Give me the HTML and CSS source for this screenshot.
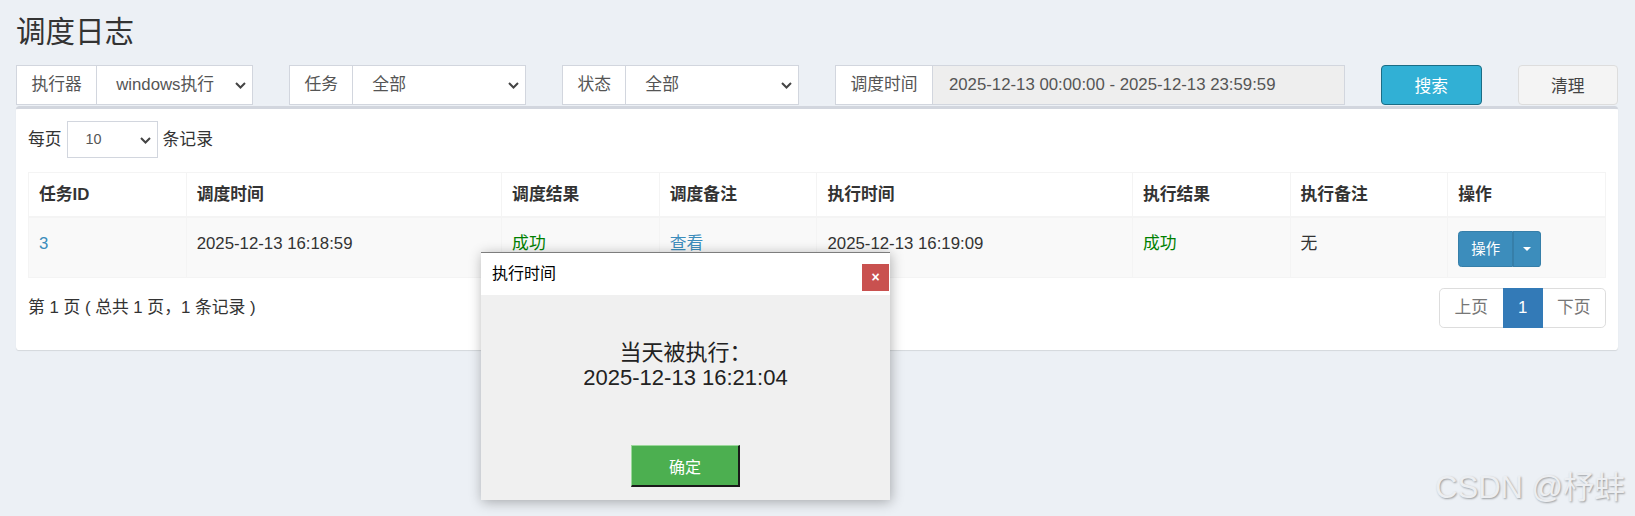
FILE: index.html
```html
<!DOCTYPE html>
<html lang="zh-CN">
<head>
    <meta charset="UTF-8">
    <meta name="viewport" content="width=device-width, initial-scale=1.0">
    <title>调度日志</title>
    <link rel="stylesheet" href="styles.css">
</head>
<body>
    <!-- Cabeçalho -->
    <div class="content-header">
        <h1>调度日志</h1>
    </div>

    <section class="content">
        <!-- Filtros -->
        <div class="filter-row">
            <div class="col-2">
                <div class="input-group">
                    <span class="addon">执行器</span>
                    <div class="select">windows执行
                        <svg class="chevron" width="11" height="7" viewBox="0 0 11 7"><path d="M1 1 L5.5 5.5 L10 1" /></svg>
                    </div>
                </div>
            </div>
            <div class="col-2">
                <div class="input-group">
                    <span class="addon">任务</span>
                    <div class="select">全部
                        <svg class="chevron" width="11" height="7" viewBox="0 0 11 7"><path d="M1 1 L5.5 5.5 L10 1" /></svg>
                    </div>
                </div>
            </div>
            <div class="col-2">
                <div class="input-group">
                    <span class="addon">状态</span>
                    <div class="select">全部
                        <svg class="chevron" width="11" height="7" viewBox="0 0 11 7"><path d="M1 1 L5.5 5.5 L10 1" /></svg>
                    </div>
                </div>
            </div>
            <div class="col-4">
                <div class="input-group">
                    <span class="addon">调度时间</span>
                    <div class="input readonly">2025-12-13 00:00:00 - 2025-12-13 23:59:59</div>
                </div>
            </div>
            <div class="col-1">
                <button class="btn btn-info">搜索</button>
            </div>
            <div class="col-1">
                <button class="btn btn-default">清理</button>
            </div>
        </div>

        <!-- Tabela -->
        <div class="box">
            <div class="box-body">
                <div class="length">
                    <span>每页</span>
                    <div class="select select-sm">10
                        <svg class="chevron" width="11" height="7" viewBox="0 0 11 7"><path d="M1 1 L5.5 5.5 L10 1" /></svg>
                    </div>
                    <span>条记录</span>
                </div>

                <table class="log-table">
                    <thead>
                        <tr>
                            <th class="w1">任务ID</th>
                            <th class="w2">调度时间</th>
                            <th class="w1">调度结果</th>
                            <th class="w1">调度备注</th>
                            <th class="w2">执行时间</th>
                            <th class="w1">执行结果</th>
                            <th class="w1">执行备注</th>
                            <th class="w1">操作</th>
                        </tr>
                    </thead>
                    <tbody>
                        <tr>
                            <td><a class="link">3</a></td>
                            <td>2025-12-13 16:18:59</td>
                            <td class="ok">成功</td>
                            <td><a class="link">查看</a></td>
                            <td>2025-12-13 16:19:09</td>
                            <td class="ok">成功</td>
                            <td>无</td>
                            <td>
                                <div class="btn-group">
                                    <span class="btn-sm">操作</span>
                                    <span class="btn-sm toggle"><span class="caret"></span></span>
                                </div>
                            </td>
                        </tr>
                    </tbody>
                </table>

                <div class="table-footer">
                    <div class="info">第 1 页 ( 总共 1 页，1 条记录 )</div>
                    <ul class="pagination">
                        <li class="disabled">上页</li>
                        <li class="active">1</li>
                        <li class="disabled">下页</li>
                    </ul>
                </div>
            </div>
        </div>
    </section>

    <!-- Janela de diálogo -->
    <div class="layer">
        <div class="layer-title">
            执行时间
            <span class="layer-close">×</span>
        </div>
        <div class="layer-content">
            <p>当天被执行：<br>2025-12-13 16:21:04</p>
            <button class="layer-btn">确定</button>
        </div>
    </div>

    <div class="watermark">CSDN @杼蚌</div>
</body>
</html>
```

FILE: styles.css
```css
/* Reset e Estilos Globais */
* {
    margin: 0;
    padding: 0;
    box-sizing: border-box;
    font-family: "Liberation Sans", "Noto Sans CJK SC", sans-serif;
}

body {
    background-color: #ecf0f5;
    color: #333;
    font-size: 16.8px;
    line-height: 24px;
    width: 1635px;
    height: 516px;
    overflow: hidden;
    position: relative;
}

/* Cabeçalho */
.content-header {
    padding: 15px 16px 0;
}

.content-header h1 {
    font-size: 29.5px;
    font-weight: normal;
    line-height: 34px;
    color: #333;
}

.content {
    padding: 16px 17px 0 16px;
}

/* Filtros */
.filter-row {
    display: grid;
    grid-template-columns: 2fr 2fr 2fr 4fr 1fr 1fr;
    margin: 0 -18px;
}

.filter-row > div {
    padding: 0 18px;
}

.input-group {
    display: flex;
    height: 40px;
}

.addon {
    background: #fff;
    border: 1px solid #d2d6de;
    border-right: none;
    color: #555;
    padding: 0 14.4px;
    line-height: 38px;
    white-space: nowrap;
}

.select {
    flex: 1;
    position: relative;
    background: #fff;
    border: 1px solid #d2d6de;
    color: #555;
    line-height: 38px;
    padding-left: 19px;
    white-space: nowrap;
}

.chevron {
    position: absolute;
    right: 6px;
    top: 50%;
    margin-top: -3px;
}

.chevron path {
    fill: none;
    stroke: #444;
    stroke-width: 2;
}

.input {
    flex: 1;
    border: 1px solid #d2d6de;
    color: #555;
    line-height: 38px;
    padding-left: 16px;
    white-space: nowrap;
}

.readonly {
    background: #eee;
}

.btn {
    width: 100%;
    height: 40px;
    font-size: 16.8px;
    border-radius: 4px;
    cursor: pointer;
}

.btn-info {
    background: #31b0d5;
    border: 1px solid #1b6d85;
    color: #fff;
}

.btn-default {
    background: #f4f4f4;
    border: 1px solid #ddd;
    color: #444;
}

/* Caixa da tabela */
.box {
    margin-top: 1px;
    background: #fff;
    border-top: 3.6px solid #d2d6de;
    border-radius: 3.6px;
    box-shadow: 0 1px 1px rgba(0, 0, 0, 0.1);
}

.box-body {
    padding: 12px 12px 22px;
}

.length {
    display: flex;
    align-items: center;
    gap: 5px;
}

.select-sm {
    flex: none;
    width: 91px;
    height: 37px;
    font-size: 14.4px;
    line-height: 35px;
    padding-left: 18px;
}

.log-table {
    width: 100%;
    margin-top: 14px;
    border-collapse: collapse;
    border: 1px solid #f4f4f4;
    table-layout: fixed;
}

.log-table th,
.log-table td {
    border: 1px solid #f4f4f4;
    text-align: left;
    vertical-align: top;
}

.log-table th {
    padding: 10px 10px 9px;
    font-weight: bold;
    border-bottom: 2.4px solid #f4f4f4;
}

.log-table td {
    padding: 14px 10px 10px;
    background: #f9f9f9;
}

.w1 {
    width: 10%;
}

.w2 {
    width: 20%;
}

.link {
    color: #3c8dbc;
}

.ok {
    color: green;
}

.btn-group {
    display: flex;
    margin-top: -1px;
}

.btn-sm {
    display: inline-flex;
    align-items: center;
    height: 35.6px;
    padding: 0 12px;
    font-size: 14.4px;
    color: #fff;
    background: #3c8dbc;
    border: 1px solid #367fa9;
    border-radius: 3.6px 0 0 3.6px;
}

.btn-sm.toggle {
    padding: 0 9.6px;
    border-left: none;
    border-radius: 0 3.6px 3.6px 0;
    box-shadow: inset 1px 0 0 #367fa9;
}

.caret {
    width: 0;
    height: 0;
    border-top: 4.8px solid #fff;
    border-left: 4.8px solid transparent;
    border-right: 4.8px solid transparent;
}

/* Rodapé */
.table-footer {
    display: flex;
    justify-content: space-between;
    align-items: center;
    margin-top: 10px;
}

.pagination {
    display: flex;
    list-style: none;
}

.pagination li {
    padding: 7.2px 14.4px;
    line-height: 24px;
    border: 1px solid #ddd;
    margin-left: -1px;
    color: #777;
    background: #fff;
}

.pagination li:first-child {
    border-radius: 4.8px 0 0 4.8px;
}

.pagination li:last-child {
    border-radius: 0 4.8px 4.8px 0;
}

.pagination li.active {
    background: #337ab7;
    border-color: #337ab7;
    color: #fff;
    position: relative;
}

/* Janela de diálogo */
.layer {
    position: absolute;
    left: 481px;
    top: 252px;
    width: 409px;
    height: 248px;
    background: #f0f0f0;
    border-top: 1px solid #7d7d7d;
    box-shadow: 1px 2px 12px rgba(0, 0, 0, 0.3);
}

.layer-title {
    position: relative;
    height: 42px;
    line-height: 42px;
    padding-left: 11px;
    background: #fff;
    color: #000;
    font-size: 16px;
}

.layer-close {
    position: absolute;
    right: 1px;
    top: 11px;
    width: 27px;
    height: 27px;
    line-height: 26px;
    text-align: center;
    background: #c9514f;
    color: #fff;
    font-size: 14px;
    font-weight: bold;
}

.layer-content {
    text-align: center;
}

.layer-content p {
    padding-top: 45px;
    font-size: 22px;
    line-height: 25px;
    color: #222;
}

.layer-btn {
    margin-top: 55px;
    width: 109px;
    height: 42px;
    background: #4caf50;
    color: #fff;
    font-size: 16px;
    border-top: 1px solid #9bd89b;
    border-left: 1px solid #9bd89b;
    border-bottom: 2px solid #1a1a1a;
    border-right: 2px solid #1a1a1a;
}

/* Marca d'água */
.watermark {
    position: absolute;
    right: 10px;
    top: 470px;
    font-size: 31px;
    line-height: 36px;
    color: #eceef1;
    text-shadow: 1px 1px 2px rgba(0, 0, 0, 0.35);
}
```
